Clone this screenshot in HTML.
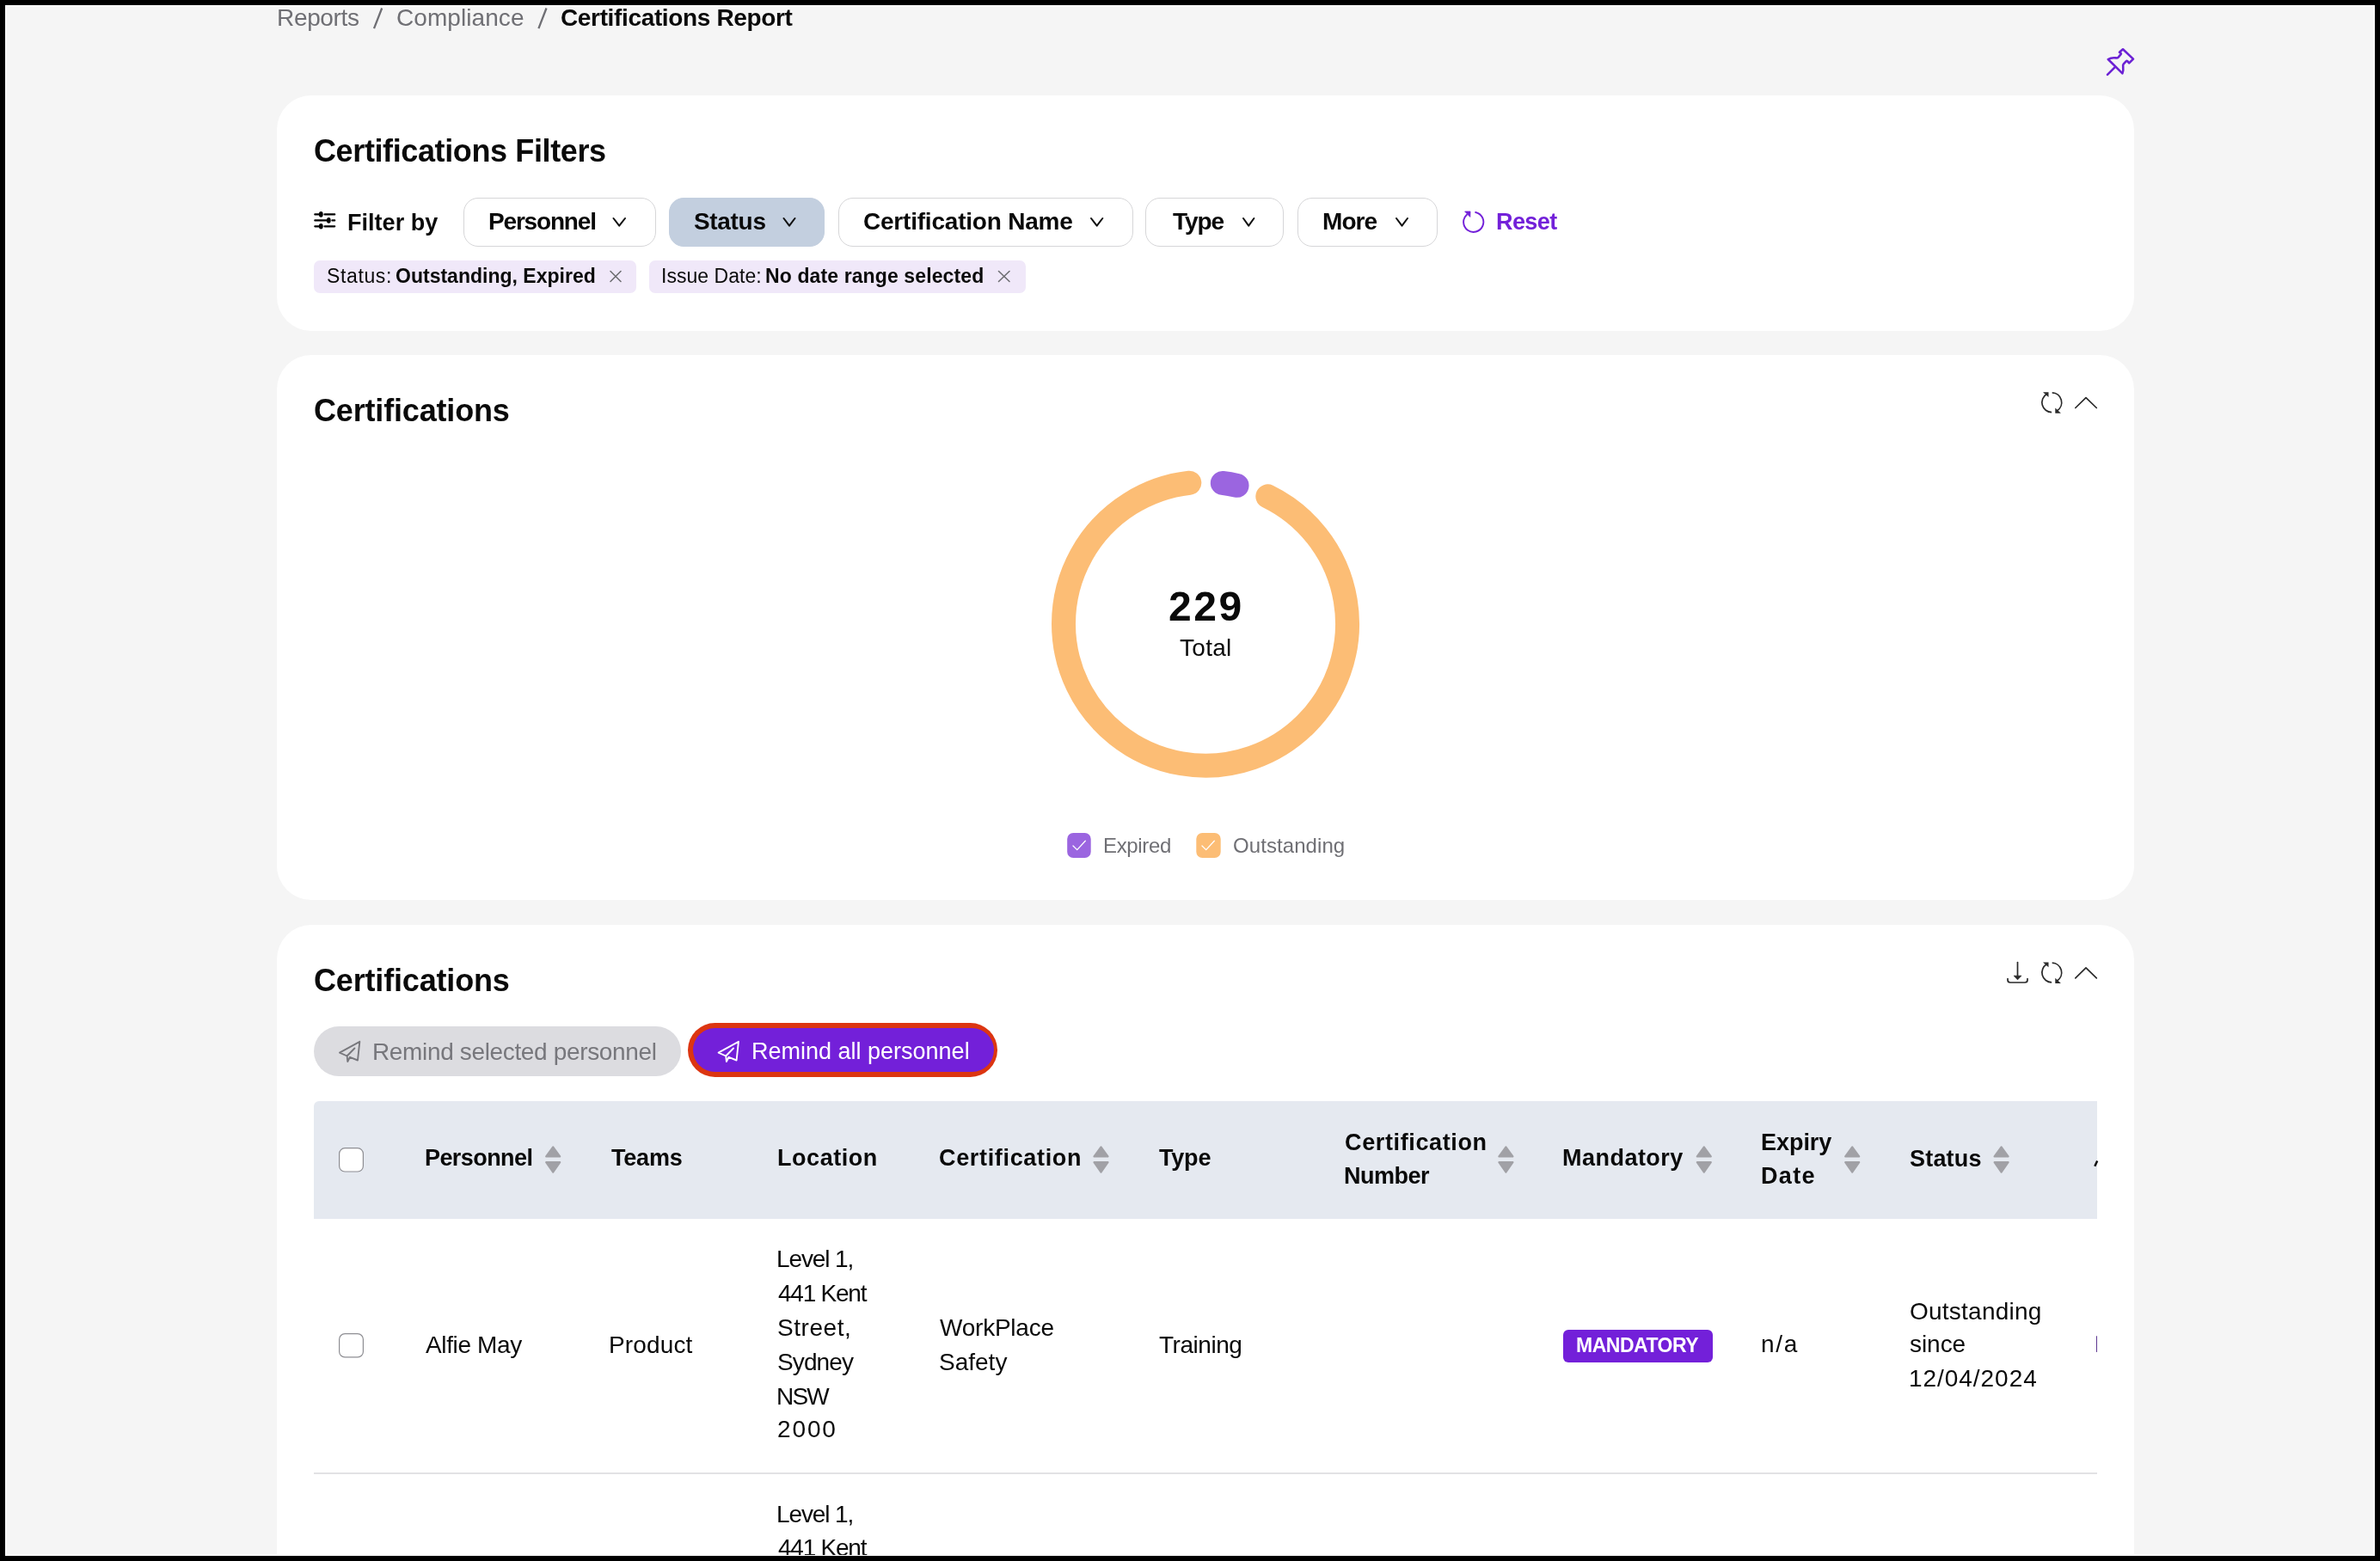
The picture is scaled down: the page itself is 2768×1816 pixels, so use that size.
<!DOCTYPE html>
<html><head><meta charset="utf-8">
<style>
html,body{margin:0;padding:0;}
body{width:2768px;height:1816px;background:#000;position:relative;overflow:hidden;font-family:"Liberation Sans",sans-serif;}
#scr{position:absolute;left:6px;top:6px;width:2756px;height:1804px;background:#f5f5f5;overflow:hidden;}
#frame{position:absolute;left:0;top:0;width:2768px;height:1816px;box-sizing:border-box;border:6px solid #000;box-shadow:inset 0 0 0 1px #fff;pointer-events:none;z-index:10;}
.card{position:absolute;background:#fff;border-radius:40px;}
.t{position:absolute;white-space:nowrap;line-height:1;will-change:transform;}
.btn{position:absolute;box-sizing:border-box;border:1.5px solid #d6d6d8;border-radius:17px;background:#fff;}
.chip{position:absolute;background:#f0e8f9;border-radius:7px;}
</style></head><body>
<div id="scr"></div>
<!-- cards -->
<div class="card" style="left:322px;top:111px;width:2160px;height:274px"></div>
<div class="card" style="left:322px;top:413px;width:2160px;height:634px"></div>
<div class="card" style="left:322px;top:1076px;width:2160px;height:800px"></div>
<!-- filter buttons -->
<div class="btn" style="left:539px;top:230px;width:224px;height:57px"></div>
<div class="btn" style="left:778px;top:230px;width:181px;height:57px;background:#c3cfdf;border-color:#c3cfdf"></div>
<div class="btn" style="left:975px;top:230px;width:343px;height:57px"></div>
<div class="btn" style="left:1332px;top:230px;width:161px;height:57px"></div>
<div class="btn" style="left:1509px;top:230px;width:163px;height:57px"></div>
<!-- chips -->
<div class="chip" style="left:365px;top:303px;width:375px;height:37.5px"></div>
<div class="chip" style="left:755px;top:303px;width:438px;height:37.5px"></div>
<!-- remind buttons -->
<div style="position:absolute;left:365px;top:1194px;width:427px;height:58px;border-radius:29px;background:#dcdce0"></div>
<div style="position:absolute;left:800px;top:1190px;width:360px;height:63px;border-radius:32px;background:#dc3511"></div>
<div style="position:absolute;left:806px;top:1196px;width:349.5px;height:51px;border-radius:26px;background:#7320d9"></div>
<!-- table header -->
<div style="position:absolute;left:365px;top:1281px;width:2074px;height:137px;background:#e5e9f0;border-radius:6px 0 0 0"></div>
<div style="position:absolute;left:365px;top:1713px;width:2074px;height:1.5px;background:#e2e2e4"></div>
<!-- mandatory badge -->
<div style="position:absolute;left:1818px;top:1547px;width:174px;height:38px;border-radius:6px;background:#7320d9"></div>
<div style="position:absolute;left:2437.6px;top:1554px;width:1.6px;height:19px;border-radius:1px;background:#5e3891"></div>
<div id="bc1" class="t" style="left:321.90px;top:6.80px;font-size:28px;font-weight:400;color:#6f6f74;letter-spacing:-0.333px">Reports</div>
<div id="bc2" class="t" style="left:460.60px;top:6.80px;font-size:28px;font-weight:400;color:#6f6f74;letter-spacing:0.067px">Compliance</div>
<div id="bc3" class="t" style="left:652.40px;top:6.60px;font-size:28px;font-weight:700;color:#0a0a0a;letter-spacing:-0.350px">Certifications Report</div>
<div id="t1" class="t" style="left:365.10px;top:158.13px;font-size:36px;font-weight:700;color:#0a0a0a;letter-spacing:-0.381px">Certifications Filters</div>
<div id="fb" class="t" style="left:404.40px;top:246.24px;font-size:27px;font-weight:700;color:#0a0a0a;letter-spacing:0.025px">Filter by</div>
<div id="b1" class="t" style="left:567.80px;top:244.20px;font-size:28px;font-weight:700;color:#0a0a0a;letter-spacing:-1.175px">Personnel</div>
<div id="b2" class="t" style="left:806.70px;top:244.30px;font-size:28px;font-weight:700;color:#0a0a0a;letter-spacing:-0.320px">Status</div>
<div id="b3" class="t" style="left:1004.10px;top:244.30px;font-size:28px;font-weight:700;color:#0a0a0a;letter-spacing:-0.212px">Certification Name</div>
<div id="b4" class="t" style="left:1364.00px;top:244.30px;font-size:28px;font-weight:700;color:#0a0a0a;letter-spacing:-1.067px">Type</div>
<div id="b5" class="t" style="left:1537.60px;top:244.30px;font-size:28px;font-weight:700;color:#0a0a0a;letter-spacing:-0.933px">More</div>
<div id="rs" class="t" style="left:1740.20px;top:245.34px;font-size:27px;font-weight:700;color:#7321d9;letter-spacing:-0.600px">Reset</div>
<div id="c1a" class="t" style="left:380.00px;top:309.73px;font-size:23px;font-weight:400;color:#0a0a0a;letter-spacing:0.633px">Status:</div>
<div id="c1b" class="t" style="left:459.60px;top:309.73px;font-size:23px;font-weight:700;color:#0a0a0a;letter-spacing:0.011px">Outstanding, Expired</div>
<div id="c2a" class="t" style="left:768.60px;top:309.73px;font-size:23px;font-weight:400;color:#0a0a0a;letter-spacing:0.040px">Issue Date:</div>
<div id="c2b" class="t" style="left:890.30px;top:309.73px;font-size:23px;font-weight:700;color:#0a0a0a;letter-spacing:0.114px">No date range selected</div>
<div id="t2" class="t" style="left:365.20px;top:460.03px;font-size:36px;font-weight:700;color:#0a0a0a;letter-spacing:-0.169px">Certifications</div>
<div id="n229" class="t" style="left:1359.40px;top:682.37px;font-size:48px;font-weight:700;color:#0a0a0a;letter-spacing:2.600px">229</div>
<div id="tot" class="t" style="left:1372.40px;top:739.80px;font-size:28px;font-weight:400;color:#0a0a0a;letter-spacing:0.300px">Total</div>
<div id="lg1" class="t" style="left:1282.90px;top:972.18px;font-size:24px;font-weight:400;color:#6f6f74;letter-spacing:-0.333px">Expired</div>
<div id="lg2" class="t" style="left:1433.60px;top:972.18px;font-size:24px;font-weight:400;color:#6f6f74;letter-spacing:0.080px">Outstanding</div>
<div id="t3" class="t" style="left:365.20px;top:1122.93px;font-size:36px;font-weight:700;color:#0a0a0a;letter-spacing:-0.169px">Certifications</div>
<div id="rm1" class="t" style="left:433.00px;top:1209.50px;font-size:28px;font-weight:400;color:#77777c;letter-spacing:-0.350px">Remind selected personnel</div>
<div id="rm2" class="t" style="left:874.00px;top:1209.54px;font-size:27px;font-weight:400;color:#ffffff;letter-spacing:0.000px">Remind all personnel</div>
<div id="h1" class="t" style="left:493.60px;top:1334.34px;font-size:27px;font-weight:700;color:#0a0a0a;letter-spacing:-0.575px">Personnel</div>
<div id="h2" class="t" style="left:711.00px;top:1334.34px;font-size:27px;font-weight:700;color:#0a0a0a;letter-spacing:-0.200px">Teams</div>
<div id="h3" class="t" style="left:903.80px;top:1334.34px;font-size:27px;font-weight:700;color:#0a0a0a;letter-spacing:0.543px">Location</div>
<div id="h4" class="t" style="left:1092.00px;top:1334.34px;font-size:27px;font-weight:700;color:#0a0a0a;letter-spacing:0.667px">Certification</div>
<div id="h5" class="t" style="left:1348.00px;top:1334.44px;font-size:27px;font-weight:700;color:#0a0a0a;letter-spacing:-0.200px">Type</div>
<div id="h6a" class="t" style="left:1563.80px;top:1315.54px;font-size:27px;font-weight:700;color:#0a0a0a;letter-spacing:0.633px">Certification</div>
<div id="h6b" class="t" style="left:1562.80px;top:1354.84px;font-size:27px;font-weight:700;color:#0a0a0a;letter-spacing:-0.520px">Number</div>
<div id="h7" class="t" style="left:1817.10px;top:1334.44px;font-size:27px;font-weight:700;color:#0a0a0a;letter-spacing:0.475px">Mandatory</div>
<div id="h8a" class="t" style="left:2048.40px;top:1315.64px;font-size:27px;font-weight:700;color:#0a0a0a;letter-spacing:-0.040px">Expiry</div>
<div id="h8b" class="t" style="left:2048.40px;top:1354.54px;font-size:27px;font-weight:700;color:#0a0a0a;letter-spacing:1.333px">Date</div>
<div id="h9" class="t" style="left:2220.60px;top:1334.54px;font-size:27px;font-weight:700;color:#0a0a0a;letter-spacing:0.200px">Status</div>
<div id="d1" class="t" style="left:495.20px;top:1550.60px;font-size:28px;font-weight:400;color:#0a0a0a;letter-spacing:-0.375px">Alfie May</div>
<div id="d2" class="t" style="left:708.20px;top:1550.60px;font-size:28px;font-weight:400;color:#0a0a0a;letter-spacing:0.133px">Product</div>
<div id="l1" class="t" style="left:902.70px;top:1451.40px;font-size:28px;font-weight:400;color:#0a0a0a;letter-spacing:-1.114px">Level 1,</div>
<div id="l2" class="t" style="left:904.70px;top:1491.20px;font-size:28px;font-weight:400;color:#0a0a0a;letter-spacing:-1.229px">441 Kent</div>
<div id="l3" class="t" style="left:903.70px;top:1531.40px;font-size:28px;font-weight:400;color:#0a0a0a;letter-spacing:0.567px">Street,</div>
<div id="l4" class="t" style="left:903.70px;top:1570.70px;font-size:28px;font-weight:400;color:#0a0a0a;letter-spacing:-0.880px">Sydney</div>
<div id="l5" class="t" style="left:902.70px;top:1610.50px;font-size:28px;font-weight:400;color:#0a0a0a;letter-spacing:-1.800px">NSW</div>
<div id="l6" class="t" style="left:903.70px;top:1648.80px;font-size:28px;font-weight:400;color:#0a0a0a;letter-spacing:1.867px">2000</div>
<div id="w1" class="t" style="left:1093.30px;top:1531.40px;font-size:28px;font-weight:400;color:#0a0a0a;letter-spacing:-0.225px">WorkPlace</div>
<div id="w2" class="t" style="left:1092.30px;top:1570.70px;font-size:28px;font-weight:400;color:#0a0a0a;letter-spacing:0.000px">Safety</div>
<div id="tr" class="t" style="left:1347.90px;top:1550.60px;font-size:28px;font-weight:400;color:#0a0a0a;letter-spacing:-0.457px">Training</div>
<div id="mand" class="t" style="left:1833.00px;top:1554.43px;font-size:23px;font-weight:700;color:#ffffff;letter-spacing:-0.500px">MANDATORY</div>
<div id="na" class="t" style="left:2047.60px;top:1550.20px;font-size:28px;font-weight:400;color:#0a0a0a;letter-spacing:1.700px">n/a</div>
<div id="s1" class="t" style="left:2220.60px;top:1512.20px;font-size:28px;font-weight:400;color:#0a0a0a;letter-spacing:0.240px">Outstanding</div>
<div id="s2" class="t" style="left:2220.60px;top:1550.20px;font-size:28px;font-weight:400;color:#0a0a0a;letter-spacing:-0.050px">since</div>
<div id="s3" class="t" style="left:2219.60px;top:1590.00px;font-size:28px;font-weight:400;color:#0a0a0a;letter-spacing:0.956px">12/04/2024</div>
<div id="r2l1" class="t" style="left:902.70px;top:1748.40px;font-size:28px;font-weight:400;color:#0a0a0a;letter-spacing:-1.114px">Level 1,</div>
<div id="r2l2" class="t" style="left:904.70px;top:1786.70px;font-size:28px;font-weight:400;color:#0a0a0a;letter-spacing:-1.229px">441 Kent</div>
<svg width="2768" height="1816" style="position:absolute;left:0;top:0">
 <!-- slashes -->
 <path d="M435 33.2 L444.2 9.5 M626.4 33.2 L635.5 9.5" stroke="#6f6f74" stroke-width="2.3"/>
 <!-- pin -->
 <g fill="none" stroke="#6c22d4" stroke-width="2.6" stroke-linejoin="round" stroke-linecap="round">
  <path d="M2451 86.8 L2459.5 78.3"/>
  <path d="M2469 57.3 L2481 68.6 L2476.2 73.4 L2474.3 71.2 Q2473.5 70.6 2472.6 71.4 L2469.6 74.7 Q2468.9 75.6 2469.2 77.3 Q2469.8 82.6 2468.4 85.4 L2451.8 69 Q2455.5 66.6 2461.2 67.4 Q2462.7 67.6 2463.7 66.6 L2466.6 63.2 Q2467.3 62.4 2466.4 61.6 L2465 60.8 Z"/>
 </g>
 <!-- filter icon -->
 <g stroke="#000" stroke-width="2.2" stroke-linecap="round" fill="#000">
  <path d="M366.3 249.4 H373.3 M377.5 249.4 H389.2 M366.3 256.4 H382.3 M386.4 256.4 H389.2 M366.3 263.3 H373.3 M377.5 263.3 H389.2"/>
  <ellipse cx="373.3" cy="249.4" rx="2.4" ry="3.3" stroke="none"/>
  <ellipse cx="382.3" cy="256.4" rx="2.4" ry="3.3" stroke="none"/>
  <ellipse cx="373.3" cy="263.3" rx="2.4" ry="3.3" stroke="none"/>
 </g>
 <!-- chevrons down in buttons -->
 <g fill="none" stroke="#111" stroke-width="2" stroke-linecap="round" stroke-linejoin="round">
  <path d="M713.5 254 L720.2 262.6 L727 254"/>
  <path d="M911.5 254 L918 262.6 L924.5 254"/>
  <path d="M1269 254 L1275.7 262.6 L1282.3 254"/>
  <path d="M1446 254 L1452.2 262.6 L1458.4 254"/>
  <path d="M1624 254 L1630.5 262.6 L1637 254"/>
 </g>
 <!-- chip close -->
 <g fill="none" stroke="#6e6e72" stroke-width="1.6" stroke-linecap="round">
  <path d="M710 315.5 L722 327.5 M722 315.5 L710 327.5"/>
  <path d="M1161.5 315.5 L1174 327.5 M1174 315.5 L1161.5 327.5"/>
 </g>
 <!-- reset icon -->
 <g fill="none" stroke="#7321d9" stroke-width="1.9" stroke-linecap="round">
  <path d="M1716.11 246.95 A11.6 11.6 0 1 1 1705.94 249.68"/>
 </g>
 <path d="M1703.6 246 L1710 246 L1709.8 252.4 Z" fill="#7321d9" stroke="#7321d9" stroke-width="0.8" stroke-linejoin="round"/>
 <!-- sync + chevron up card2 -->
 <g>
  <g fill="none" stroke="#2a2a2a" stroke-width="1.7">
   <path d="M2380.26 458.53 A11.4 11.4 0 0 0 2386.10 479.60"/>
   <path d="M2386.70 456.81 A11.4 11.4 0 0 1 2392.51 477.76"/>
  </g>
  <path d="M2376 456.3 L2382.5 456.3 L2382.5 462 Z M2390.3 474.5 L2390.3 480.8 L2396.9 480.8 Z" fill="#2a2a2a"/>
 </g>
 <path d="M2413.8 474.5 L2426 462.6 L2438.3 474.5" fill="none" stroke="#2a2a2a" stroke-width="1.7" stroke-linecap="round" stroke-linejoin="round"/>
 <!-- card3 icons -->
 <g transform="translate(0,663.3)"><g fill="none" stroke="#2a2a2a" stroke-width="1.7">
   <path d="M2380.26 458.53 A11.4 11.4 0 0 0 2386.10 479.60"/>
   <path d="M2386.70 456.81 A11.4 11.4 0 0 1 2392.51 477.76"/>
  </g>
  <path d="M2376 456.3 L2382.5 456.3 L2382.5 462 Z M2390.3 474.5 L2390.3 480.8 L2396.9 480.8 Z" fill="#2a2a2a"/></g>
 <path d="M2413.8 1137.8 L2426 1125.9 L2438.3 1137.8" fill="none" stroke="#2a2a2a" stroke-width="1.7" stroke-linecap="round" stroke-linejoin="round"/>
 <g fill="none" stroke="#2a2a2a" stroke-width="1.7" stroke-linecap="round">
  <path d="M2346.5 1119.6 V1135"/>
  <path d="M2335 1138.5 V1140 Q2335 1143 2338 1143 H2355 Q2358 1143 2358 1140 V1138.5"/>
 </g>
 <path d="M2342.2 1135.2 L2350.9 1135.2 L2346.5 1139.8 Z" fill="#2a2a2a" stroke="#2a2a2a" stroke-width="0.8" stroke-linejoin="round"/>
 <!-- donut -->
 <g fill="none" stroke-width="28" stroke-linecap="round">
  <path id="arcO" stroke="#fcbd75" d="M1474.33 577.40 A165 165 0 1 1 1383.32 561.76"/>
  <path id="arcP" stroke="#9b65e0" d="M1421.82 561.90 A165 165 0 0 1 1438.56 564.80"/>
 </g>
 <!-- legend boxes -->
 <rect x="1241.2" y="969" width="27.5" height="29" rx="7" fill="#9b65e0"/>
 <rect x="1391.3" y="969" width="28.4" height="29" rx="7" fill="#fcbd75"/>
 <g fill="none" stroke="#fff" stroke-width="1.3" stroke-linecap="round" stroke-linejoin="round">
  <path d="M1248 984 L1252.7 988.6 L1262.3 978.3"/>
  <path d="M1398 984 L1402.7 988.6 L1412.3 978.3"/>
 </g>
 <!-- paper planes -->
 <g stroke-width="1.9" stroke-linejoin="round" stroke-linecap="round" style="color:#fff">
  <path fill="none" stroke="currentColor" d="M858.9 1211.8 L835.6 1224.6 L844.2 1228.5 L844.9 1235 L847.6 1229.8 L856.6 1233.5 Z M853 1219.5 L844.2 1228.5"/>
 </g>
 <g style="color:#77777c" stroke-width="1.9" stroke-linejoin="round" stroke-linecap="round"><path transform="translate(-440.6,0)" fill="none" stroke="currentColor" d="M858.9 1211.8 L835.6 1224.6 L844.2 1228.5 L844.9 1235 L847.6 1229.8 L856.6 1233.5 Z M853 1219.5 L844.2 1228.5"/></g>
 <!-- checkboxes -->
 <rect x="394.6" y="1335.7" width="27.8" height="27.3" rx="6.5" fill="#fff" stroke="#8e8e93" stroke-width="1.2"/>
 <rect x="394.6" y="1551.6" width="27.8" height="27.3" rx="6.5" fill="#fff" stroke="#8e8e93" stroke-width="1.2"/>
 <!-- sort icons -->
 <g fill="#a1a1a6" stroke="#a1a1a6" stroke-width="2.2" stroke-linejoin="round">
  <path d="M643.2 1334.4 L651.2 1345.4 L635.2 1345.4 Z"/>
  <path d="M635.2 1352.2 L651.2 1352.2 L643.2 1363.6 Z"/>
 </g>
 <g transform="translate(637.3,0)" fill="#a1a1a6" stroke="#a1a1a6" stroke-width="2.2" stroke-linejoin="round"><path d="M643.2 1334.4 L651.2 1345.4 L635.2 1345.4 Z"/>
  <path d="M635.2 1352.2 L651.2 1352.2 L643.2 1363.6 Z"/></g>
 <g transform="translate(1108.2,0)" fill="#a1a1a6" stroke="#a1a1a6" stroke-width="2.2" stroke-linejoin="round"><path d="M643.2 1334.4 L651.2 1345.4 L635.2 1345.4 Z"/>
  <path d="M635.2 1352.2 L651.2 1352.2 L643.2 1363.6 Z"/></g>
 <g transform="translate(1338.6,0)" fill="#a1a1a6" stroke="#a1a1a6" stroke-width="2.2" stroke-linejoin="round"><path d="M643.2 1334.4 L651.2 1345.4 L635.2 1345.4 Z"/>
  <path d="M635.2 1352.2 L651.2 1352.2 L643.2 1363.6 Z"/></g>
 <g transform="translate(1511,0)" fill="#a1a1a6" stroke="#a1a1a6" stroke-width="2.2" stroke-linejoin="round"><path d="M643.2 1334.4 L651.2 1345.4 L635.2 1345.4 Z"/>
  <path d="M635.2 1352.2 L651.2 1352.2 L643.2 1363.6 Z"/></g>
 <g transform="translate(1684.4,0)" fill="#a1a1a6" stroke="#a1a1a6" stroke-width="2.2" stroke-linejoin="round"><path d="M643.2 1334.4 L651.2 1345.4 L635.2 1345.4 Z"/>
  <path d="M635.2 1352.2 L651.2 1352.2 L643.2 1363.6 Z"/></g>
 <path d="M2436.3 1356.8 L2439.2 1350.5" stroke="#111" stroke-width="2.5"/>
</svg>
<div id="frame"></div>
</body></html>
